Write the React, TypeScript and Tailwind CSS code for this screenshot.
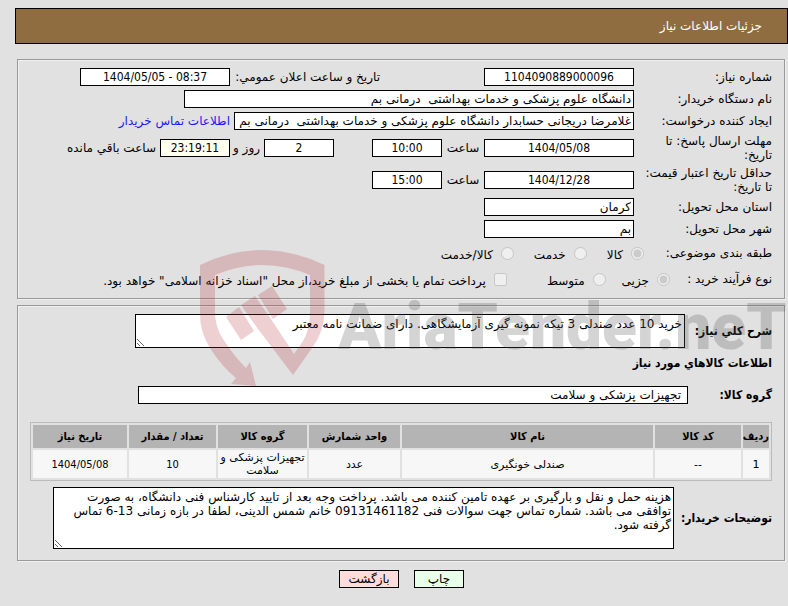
import React from "react";

const boxClass = "h-[18px] border border-black bg-white px-[2px] text-xs leading-4 outline-none";
const numberClass = "text-center font-['DejaVu_Sans_Condensed','DejaVu_Sans',sans-serif]";
const boldClass = "font-bold font-['DejaVu_Sans_Condensed','DejaVu_Sans',sans-serif]";
const panelClass = "border border-[#999] shadow-[inset_1px_1px_0_#f0f0f0,1px_1px_0_#f0f0f0]";

type FieldProps = {
  id: string;
  label: string;
  value: string;
  className?: string;
};

const Label = ({ htmlFor, children }: { htmlFor?: string; children: React.ReactNode }) => (
  <label htmlFor={htmlFor} className="w-[138px] shrink-0 pl-3">
    {children}
  </label>
);

const Field = ({ id, label, value, className = "" }: FieldProps) => (
  <div className="flex items-center">
    <Label htmlFor={id}>{label}</Label>
    <input id={id} className={`${boxClass} ${className}`} defaultValue={value} />
  </div>
);

type ChoiceProps = {
  type: string;
  name: string;
  label: string;
  checked?: boolean;
};

const Choice = ({ type, name, label, checked = false }: ChoiceProps) => (
  <label className="flex items-center gap-2">
    <input type={type} name={name} defaultChecked={checked} disabled className="m-0 h-[13px] w-[13px]" />
    <span className="pt-1">{label}</span>
  </label>
);

const columns = [
  { title: "ردیف", width: "w-[26px]", value: "1" },
  { title: "کد کالا", width: "w-[86px]", value: "--" },
  { title: "نام کالا", width: "w-auto", value: "صندلی خونگیری" },
  { title: "واحد شمارش", width: "w-[91px]", value: "عدد" },
  { title: "گروه کالا", width: "w-[89px]", value: "تجهیزات پزشکی و سلامت" },
  { title: "تعداد / مقدار", width: "w-[87px]", value: "10", numeric: true },
  { title: "تاریخ نیاز", width: "w-[94px]", value: "1404/05/08", numeric: true },
];

const Watermark = () => (
  <div className="pointer-events-none absolute top-[246px] left-[198px] flex" dir="ltr">
    <svg className="h-[142px] w-[140px]" viewBox="198 246 140 142">
      <g fill="#b52a33" fillOpacity="0.22">
        <path d="M200 265Q262 235 324.500 265V312Q324 332 312 348L293 375L258 329L241 305L255 296L271 319L294 354L303 341Q310 330 310 312V275Q262 255 215 275V312Q215 327 223 339Q234 356 246 368L250 362L256 386L231 384L236 378Q222 367 210 348Q200 332 200 315Z" />
        <path d="M226 317L239 307L254 331L241 340Z" />
        <path d="M258 295L272 286L287 309L273 319Z" />
      </g>
    </svg>
    <span className="mt-[42px] font-[Roboto,sans-serif] text-[64px] leading-[80px] font-black text-[#555]/25">
      AriaTender.neT
    </span>
  </div>
);

export default function App() {
  return (
    <div dir="rtl" className="relative min-h-screen overflow-hidden bg-[#e1e1e1] pt-2 pb-4 font-['DejaVu_Sans',sans-serif] text-xs leading-[14px] text-black">
      <header className="ml-[15px] flex h-9 items-center border border-black bg-[#8f6d40] px-[25px] text-white">
        <h1>جزئیات اطلاعات نیاز</h1>
      </header>

      <main className="mt-[15px] mr-[3px] ml-[17px] flex flex-col gap-[6px]">
        <section className={`${panelClass} flex flex-col gap-1 px-3 pt-2 pb-2`}>
          <div className="flex items-center">
            <Label htmlFor="number">شماره نیاز:</Label>
            <input id="number" className={`${boxClass} ${numberClass} w-[150px]`} defaultValue="1104090889000096" />
            <label htmlFor="announced" className="mr-[104px] w-[150px]">تاريخ و ساعت اعلان عمومي:</label>
            <input id="announced" dir="ltr" className={`${boxClass} ${numberClass} w-[150px]`} defaultValue="1404/05/05 - 08:37" />
          </div>
          <Field id="buyer" label="نام دستگاه خریدار:" value="دانشگاه علوم پزشکی و خدمات بهداشتی  درمانی بم" className="w-[450px]" />
          <div className="flex items-center gap-1">
            <Field id="creator" label="ایجاد کننده درخواست:" value="غلامرضا دریجانی حسابدار دانشگاه علوم پزشکی و خدمات بهداشتی  درمانی بم" className="w-[400px]" />
            <a href="#contact" className="text-[#1a1aee]">اطلاعات تماس خریدار</a>
          </div>
          <div className="flex items-center">
            <Label htmlFor="deadline">مهلت ارسال پاسخ: تا تاریخ:</Label>
            <input id="deadline" className={`${boxClass} ${numberClass} w-[150px]`} defaultValue="1404/05/08" />
            <label htmlFor="deadline-hour" className="w-[42px] text-center">ساعت</label>
            <input id="deadline-hour" className={`${boxClass} ${numberClass} w-[70px]`} defaultValue="10:00" />
            <input id="days" aria-label="روز" className={`${boxClass} ${numberClass} mr-[38px] w-[70px]`} defaultValue="2" />
            <label htmlFor="remaining" className="w-[34px] pr-1">روز و</label>
            <input id="remaining" className={`${numberClass} h-[18px] w-[70px] border border-black bg-[#fffff0]`} defaultValue="23:19:11" />
            <span className="mr-1">ساعت باقي مانده</span>
          </div>
          <div className="flex items-center">
            <label htmlFor="validity" className="w-[138px] shrink-0 pl-2">حداقل تاریخ اعتبار قیمت: تا تاریخ:</label>
            <input id="validity" className={`${boxClass} ${numberClass} w-[150px]`} defaultValue="1404/12/28" />
            <label htmlFor="validity-hour" className="w-[42px] text-center">ساعت</label>
            <input id="validity-hour" className={`${boxClass} ${numberClass} w-[70px]`} defaultValue="15:00" />
          </div>
          <Field id="province" label="استان محل تحویل:" value="کرمان" className="w-[150px]" />
          <Field id="city" label="شهر محل تحویل:" value="بم" className="w-[150px]" />
          <div className="flex h-[22px] items-center">
            <span className="w-[128px]">طبقه بندی موضوعی:</span>
            <div className="flex gap-5">
              <Choice type="radio" name="subject" label="کالا" checked />
              <Choice type="radio" name="subject" label="خدمت" />
              <Choice type="radio" name="subject" label="کالا/خدمت" />
            </div>
          </div>
          <div className="flex h-[22px] items-center">
            <span className="w-[102px]">نوع فرآیند خرید :</span>
            <div className="flex gap-4">
              <Choice type="radio" name="process" label="جزیی" checked />
              <Choice type="radio" name="process" label="متوسط" />
            </div>
            <div className="mr-10">
              <Choice type="checkbox" name="treasury" label={'پرداخت تمام یا بخشی از مبلغ خرید،از محل "اسناد خزانه اسلامی" خواهد بود.'} />
            </div>
          </div>
        </section>

        <section className={`${panelClass} px-3 pt-2 pb-[11px]`}>
          <div className="flex items-center">
            <label htmlFor="summary" className={`${boldClass} w-[87px]`}>شرح کلي نیاز:</label>
            <textarea id="summary" className="h-[34px] w-[550px] resize border border-black bg-white p-[2px] leading-[14px]" defaultValue="خرید 10 عدد صندلی 3 تیکه نمونه گیری آزمایشگاهی. دارای ضمانت نامه معتبر" />
          </div>
          <h2 className={`${boldClass} mt-2`}>اطلاعات کالاهاي مورد نیاز</h2>
          <div className="mt-4 flex items-center">
            <label htmlFor="group" className={`${boldClass} w-[84px]`}>گروه کالا:</label>
            <input id="group" className="h-[18px] w-[550px] border border-black bg-white px-[6px]" defaultValue="تجهیزات پزشکی و سلامت" />
          </div>
          <div className="mt-[18px] border border-[#bbb]">
            <table className="w-full table-fixed border-separate border-spacing-[2px] text-center text-[11px] leading-[13px]">
              <thead>
                <tr className="h-[23px]">
                  {columns.map((column) => (
                    <th key={column.title} className={`${column.width} ${boldClass} bg-[#b4b4b4] p-0`}>{column.title}</th>
                  ))}
                </tr>
              </thead>
              <tbody>
                <tr className="h-7">
                  {columns.map((column) => (
                    <td key={column.title} className={`${column.numeric ? numberClass : ""} bg-[#f7f7f7]`}>{column.value}</td>
                  ))}
                </tr>
              </tbody>
            </table>
          </div>
          <div className="mt-[6px] flex items-center">
            <label htmlFor="notes" className={`${boldClass} w-[98px]`}>توضیحات خریدار:</label>
            <textarea id="notes" className="h-[62px] w-[621px] resize border border-black bg-white p-[2px] leading-[14px]" defaultValue="هزینه حمل و نقل و بارگیری بر عهده تامین کننده می باشد. پرداخت وجه بعد از تایید کارشناس فنی دانشگاه، به صورت توافقی می باشد. شماره تماس جهت سوالات فنی 09131461182 خانم شمس الدینی، لطفا در بازه زمانی 13-6 تماس گرفته شود." />
          </div>
        </section>
      </main>

      <footer className="mt-[9px] ml-[15px] flex justify-center gap-[15px]">
        <button type="button" className="h-[18px] w-[50px] border border-black bg-[#eaffea] leading-4">چاپ</button>
        <button type="button" className="h-[18px] w-[60px] border border-black bg-[#ffdcdc] leading-4">بازگشت</button>
      </footer>

      <Watermark />
    </div>
  );
}
